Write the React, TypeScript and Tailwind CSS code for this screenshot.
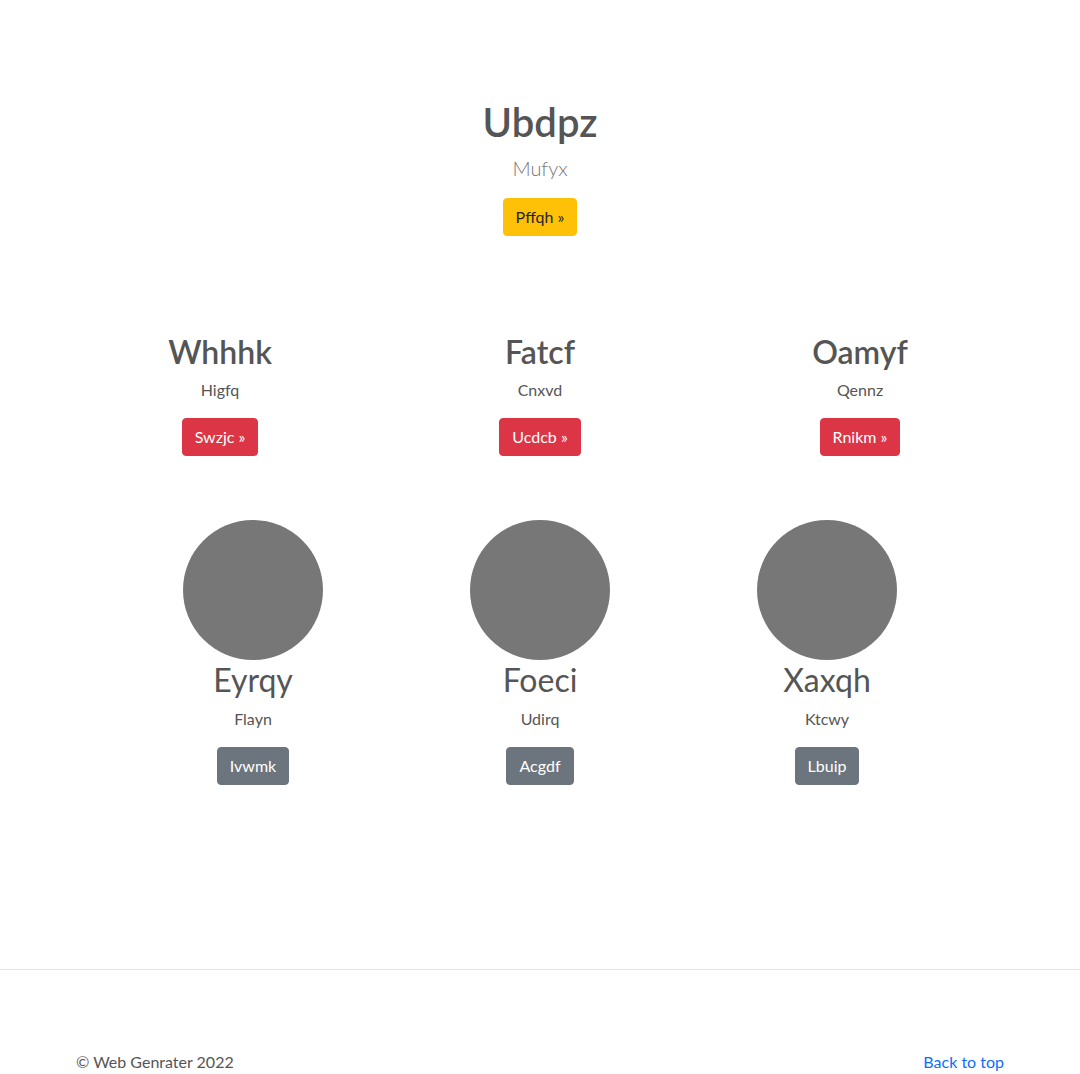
import { Fragment } from "react";

const features = [
  { title: "Whhhk", text: "Higfq", cta: "Swzjc »" },
  { title: "Fatcf", text: "Cnxvd", cta: "Ucdcb »" },
  { title: "Oamyf", text: "Qennz", cta: "Rnikm »" },
];

const people = [
  { name: "Eyrqy", text: "Flayn", cta: "Ivwmk" },
  { name: "Foeci", text: "Udirq", cta: "Acgdf" },
  { name: "Xaxqh", text: "Ktcwy", cta: "Lbuip" },
];

export default function App() {
  return (
    <div className="min-h-[1074px] bg-white text-[#555] font-['Segoe_UI','Lato','Noto_Sans',sans-serif]">
      <main>
        <section className="pt-[98px] text-center">
          <h1 className="text-[40px] font-semibold leading-[1.2]">Ubdpz</h1>
          <p className="mt-[7px] text-[20px] font-light leading-[1.5] text-[#777]">Mufyx</p>
          <button className="mt-[15px] rounded-[4px] border border-[#ffc107] bg-[#ffc107] px-3 py-1.5 text-base leading-6 text-[#212529]">
            Pffqh »
          </button>
        </section>

        <section className="mx-auto mt-[97px] grid w-[960px] grid-cols-3 text-center">
          {features.map((f) => (
            <div key={f.title}>
              <h2 className="text-[32px] font-semibold leading-[1.2]">{f.title}</h2>
              <p className="mt-[7px] text-base leading-6">{f.text}</p>
              <button className="mt-4 rounded-[4px] border border-[#dc3545] bg-[#dc3545] px-3 py-1.5 text-base leading-6 text-white">
                {f.cta}
              </button>
            </div>
          ))}
        </section>

        <section className="mx-auto mt-16 grid w-[861px] grid-cols-3 text-center">
          {people.map((p) => (
            <Fragment key={p.name}>
              <div className="flex flex-col items-center">
                <div className="h-[140px] w-[140px] rounded-full bg-[#777]" />
                <h3 className="mt-px text-[32px] font-normal leading-[1.2]">{p.name}</h3>
                <p className="mt-[7px] text-base leading-6">{p.text}</p>
                <button className="mt-4 rounded-[4px] border border-[#6c757d] bg-[#6c757d] px-3 py-1.5 text-base leading-6 text-white">
                  {p.cta}
                </button>
              </div>
            </Fragment>
          ))}
        </section>
      </main>

      <hr className="mt-[184px] border-t border-[#e5e5e5]" />

      <footer className="mx-auto flex w-[960px] items-center justify-between px-4 pt-[80px] text-base leading-6">
        <p>© Web Genrater 2022</p>
        <a href="#" className="text-[#0d6efd]">Back to top</a>
      </footer>
    </div>
  );
}
